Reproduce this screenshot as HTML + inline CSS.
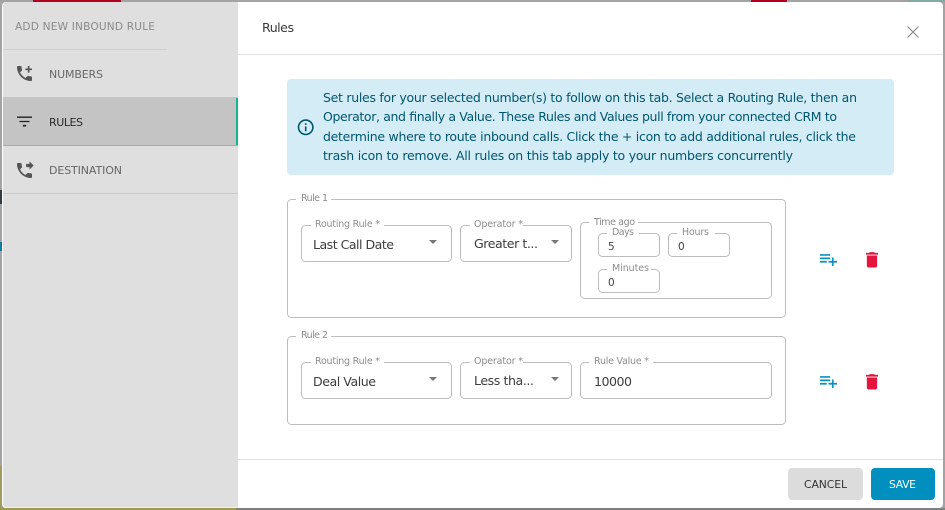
<!DOCTYPE html>
<html><head><meta charset="utf-8"><title>Rules</title>
<style>
html,body{margin:0;padding:0;width:945px;height:510px;overflow:hidden;background:#8f8f8f}
svg{display:block;font-family:"DejaVu Sans","Liberation Sans",sans-serif;filter:blur(.3px)}
.b{fill:#fff;stroke:#bdbdbd;stroke-width:1}
.l{font-size:9.5px;fill:#8c8c8c}
.v{font-size:12.6px;fill:#3d3d3d}
.n{font-size:11px;fill:#666}
.i{font-size:12.5px;fill:#00566f}
</style></head><body>
<svg width="945" height="510" viewBox="0 0 945 510" xmlns="http://www.w3.org/2000/svg">
<!-- backdrop -->
<rect width="945" height="510" fill="#a3a3a3"/>
<rect x="33" y="0" width="88" height="2" fill="#b0001f"/>
<rect x="751" y="0" width="36" height="2" fill="#b0001f"/>
<rect x="908" y="0" width="37" height="2" fill="#86a8a5"/>
<rect x="0" y="190" width="2" height="14" fill="#333a40"/>
<rect x="0" y="242" width="2" height="9" fill="#0b7ca0"/>
<rect x="0" y="466" width="2" height="44" fill="#a39a60"/>
<rect x="0" y="508" width="236" height="2" fill="#a39a50"/>
<rect x="236" y="508" width="709" height="2" fill="#808080"/>
<!-- modal -->
<rect x="2" y="2" width="941" height="506" rx="4" fill="#fff"/>
<path d="M7 2H238V507.5H7a4 4 0 0 1-4-4V6a4 4 0 0 1 4-4z" fill="#dfdfdf"/>
<!-- sidebar -->
<text x="15" y="30" font-size="10.6" fill="#8a8a8a" textLength="140" lengthAdjust="spacing">ADD NEW INBOUND RULE</text>
<rect x="3" y="49" width="164" height="1" fill="#d0d0d0"/>
<rect x="3" y="97" width="235" height="48" fill="#c4c4c4"/>
<rect x="3" y="145" width="235" height="1" fill="#aaa"/>
<rect x="236" y="98" width="2" height="47" fill="#14b58f"/>
<rect x="3" y="193" width="235" height="1" fill="#ccc"/>
<g transform="translate(14.5 63.5) scale(.833)" fill="#555"><path d="M20 15.5c-1.25 0-2.45-.2-3.57-.57-.35-.11-.74-.03-1.02.24l-2.2 2.2c-2.83-1.44-5.15-3.75-6.59-6.59l2.2-2.21c.28-.26.36-.65.25-1C8.7 6.45 8.5 5.25 8.5 4c0-.55-.45-1-1-1H4c-.55 0-1 .45-1 1 0 9.39 7.61 17 17 17 .55 0 1-.45 1-1v-3.5c0-.55-.45-1-1-1zM21 6h-3V3h-2v3h-3v2h3v3h2V8h3z"/></g>
<g transform="translate(14.5 111.5) scale(.833)" fill="#1f1f1f"><path d="M10 18h4v-2h-4v2zM3 6v1.6h18V6H3zm3 6.8h12v-1.6H6v1.6z"/></g>
<g transform="translate(14.5 160.5) scale(.833)" fill="#555"><path d="M18 11l5-5-5-5v3h-4v4h4v3zm2 4.5c-1.25 0-2.45-.2-3.57-.57-.35-.11-.74-.03-1.02.24l-2.2 2.2c-2.83-1.44-5.15-3.75-6.59-6.59l2.2-2.21c.28-.27.36-.66.25-1.01C8.7 6.45 8.5 5.25 8.5 4c0-.55-.45-1-1-1H4c-.55 0-1 .45-1 1 0 9.39 7.61 17 17 17 .55 0 1-.45 1-1v-3.5c0-.55-.45-1-1-1z"/></g>
<text x="49" y="78" class="n" textLength="54" lengthAdjust="spacing">NUMBERS</text>
<text x="49" y="126" class="n" style="fill:#2a2a2a" textLength="34" lengthAdjust="spacing">RULES</text>
<text x="49" y="174" class="n" textLength="73" lengthAdjust="spacing">DESTINATION</text>
<!-- header -->
<text x="262" y="32" font-size="12.6" fill="#3a3a3a" textLength="32" lengthAdjust="spacing">Rules</text>
<rect x="238" y="54" width="705" height="1" fill="#e0e0e0"/>
<path d="M907.5 26.5l11 11M918.5 26.5l-11 11" stroke="#8a8a8a" stroke-width="1.2" fill="none"/>
<!-- info -->
<rect x="287" y="79" width="607" height="96" rx="4" fill="#d4ecf6"/>
<g transform="translate(296.1 117.7) scale(.8)" fill="#00566f"><path d="M11 7h2v2h-2zm0 4h2v6h-2zm1-9C6.48 2 2 6.48 2 12s4.48 10 10 10 10-4.48 10-10S17.52 2 12 2zm0 18c-4.41 0-8-3.59-8-8s3.59-8 8-8 8 3.59 8 8-3.59 8-8 8z"/></g>
<text x="323" y="102" class="i" textLength="534" lengthAdjust="spacing">Set rules for your selected number(s) to follow on this tab. Select a Routing Rule, then an</text>
<text x="323" y="121" class="i" textLength="514" lengthAdjust="spacing">Operator, and finally a Value. These Rules and Values pull from your connected CRM to</text>
<text x="323" y="141" class="i" textLength="533" lengthAdjust="spacing">determine where to route inbound calls. Click the + icon to add additional rules, click the</text>
<text x="323" y="160" class="i" textLength="470" lengthAdjust="spacing">trash icon to remove. All rules on this tab apply to your numbers concurrently</text>
<!-- rule 1 -->
<rect x="287.5" y="199.5" width="498" height="118" rx="4" class="b"/>
<rect x="296" y="197" width="35" height="5" fill="#fff"/>
<text x="301" y="201" class="l" textLength="27" lengthAdjust="spacing">Rule 1</text>
<rect x="301.5" y="225.5" width="150" height="36" rx="4" class="b"/>
<rect x="311" y="223" width="73" height="5" fill="#fff"/>
<text x="315" y="227" class="l" textLength="65" lengthAdjust="spacing">Routing Rule *</text>
<text x="313" y="249" class="v" textLength="81" lengthAdjust="spacing">Last Call Date</text>
<path d="M429 240h8l-4 4z" fill="#777"/>
<rect x="460.5" y="225.5" width="111" height="36" rx="4" class="b"/>
<rect x="470" y="223" width="53" height="5" fill="#fff"/>
<text x="474" y="227" class="l" textLength="49" lengthAdjust="spacing">Operator *</text>
<text x="474" y="248" class="v" textLength="64" lengthAdjust="spacing">Greater t...</text>
<path d="M551 240h8l-4 4z" fill="#777"/>
<rect x="580.5" y="222.5" width="191" height="76" rx="4" class="b"/>
<rect x="589" y="220" width="49" height="5" fill="#fff"/>
<text x="594" y="225" class="l" textLength="41" lengthAdjust="spacing">Time ago</text>
<rect x="598.5" y="233.5" width="61" height="23" rx="4" class="b"/>
<rect x="607" y="231" width="32" height="5" fill="#fff"/>
<text x="612" y="235" class="l" textLength="22" lengthAdjust="spacing">Days</text>
<text x="608" y="250" font-size="10.5" fill="#444">5</text>
<rect x="668.5" y="233.5" width="61" height="23" rx="4" class="b"/>
<rect x="677" y="231" width="38" height="5" fill="#fff"/>
<text x="682" y="235" class="l" textLength="27" lengthAdjust="spacing">Hours</text>
<text x="678" y="250" font-size="10.5" fill="#444">0</text>
<rect x="598.5" y="269.5" width="61" height="23" rx="4" class="b"/>
<rect x="607" y="267" width="44" height="5" fill="#fff"/>
<text x="612" y="271" class="l" textLength="37" lengthAdjust="spacing">Minutes</text>
<text x="608" y="286" font-size="10.5" fill="#444">0</text>
<g transform="translate(818.3 249) scale(.85)" fill="#0b90c0"><path d="M14 10H2v2h12v-2zm0-4H2v2h12V6zm4 8v-4h-2v4h-4v2h4v4h2v-4h4v-2h-4zM2 16h8v-2H2v2z"/></g>
<g transform="translate(861.7 249.5) scale(.857)" fill="#e5143f"><path d="M6 19c0 1.1.9 2 2 2h8c1.1 0 2-.9 2-2V7H6v12zM19 4h-3.5l-1-1h-5l-1 1H5v2h14V4z"/></g>
<!-- rule 2 -->
<rect x="287.5" y="336.5" width="498" height="88" rx="4" class="b"/>
<rect x="296" y="334" width="35" height="5" fill="#fff"/>
<text x="301" y="338" class="l" textLength="27" lengthAdjust="spacing">Rule 2</text>
<rect x="301.5" y="362.5" width="150" height="36" rx="4" class="b"/>
<rect x="311" y="360" width="73" height="5" fill="#fff"/>
<text x="315" y="364" class="l" textLength="65" lengthAdjust="spacing">Routing Rule *</text>
<text x="313" y="386" class="v" textLength="63" lengthAdjust="spacing">Deal Value</text>
<path d="M429 377h8l-4 4z" fill="#777"/>
<rect x="460.5" y="362.5" width="111" height="36" rx="4" class="b"/>
<rect x="470" y="360" width="53" height="5" fill="#fff"/>
<text x="474" y="364" class="l" textLength="49" lengthAdjust="spacing">Operator *</text>
<text x="474" y="385" class="v" textLength="60" lengthAdjust="spacing">Less tha...</text>
<path d="M551 377h8l-4 4z" fill="#777"/>
<rect x="580.5" y="362.5" width="191" height="36" rx="4" class="b"/>
<rect x="589" y="360" width="64" height="5" fill="#fff"/>
<text x="594" y="364" class="l" textLength="55" lengthAdjust="spacing">Rule Value *</text>
<text x="594" y="386" class="v" textLength="38" lengthAdjust="spacing">10000</text>
<g transform="translate(818.3 371) scale(.85)" fill="#0b90c0"><path d="M14 10H2v2h12v-2zm0-4H2v2h12V6zm4 8v-4h-2v4h-4v2h4v4h2v-4h4v-2h-4zM2 16h8v-2H2v2z"/></g>
<g transform="translate(861.7 371.5) scale(.857)" fill="#e5143f"><path d="M6 19c0 1.1.9 2 2 2h8c1.1 0 2-.9 2-2V7H6v12zM19 4h-3.5l-1-1h-5l-1 1H5v2h14V4z"/></g>
<!-- footer -->
<rect x="238" y="459" width="705" height="1" fill="#e0e0e0"/>
<rect x="788" y="468" width="75" height="32" rx="4" fill="#dcdcdc"/>
<text x="804" y="488" font-size="10.8" fill="#333" textLength="43" lengthAdjust="spacing">CANCEL</text>
<rect x="871" y="468" width="64" height="32" rx="4" fill="#008fbf"/>
<text x="889" y="488" font-size="10.8" fill="#fff" textLength="27" lengthAdjust="spacing">SAVE</text>
</svg>
</body></html>
